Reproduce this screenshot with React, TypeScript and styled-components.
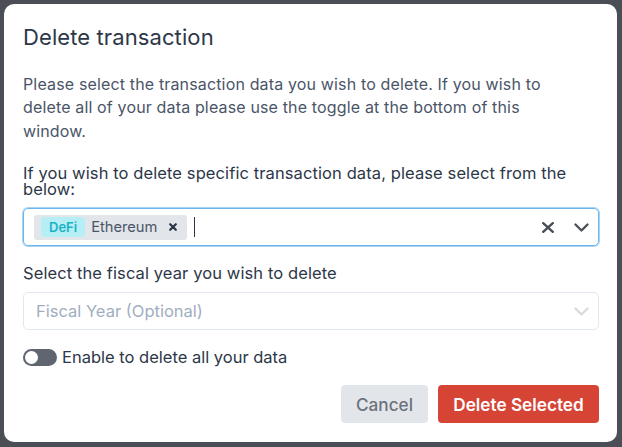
import React from "react";
import styled, { createGlobalStyle } from "styled-components";

const Global = createGlobalStyle`
  html, body { margin: 0; padding: 0; }
  body {
    width: 622px; height: 447px; overflow: hidden;
    background: #4b4f55;
    font-family: Inter, "Noto Sans", sans-serif;
  }
`;

const Overlay = styled.div`
  width: 622px;
  height: 447px;
  box-sizing: border-box;
  padding: 4px 5px 5px 4px;
  display: flex;
`;

const Dialog = styled.div`
  flex: 1;
  background: #fff;
  border-radius: 10px;
  padding: 19px 18px 19px 19px;
  display: flex;
  flex-direction: column;
`;

const Title = styled.h2`
  margin: 0;
  font-size: 22px;
  font-weight: 400;
  color: #2d3748;
  line-height: 28px;
  letter-spacing: 0.1px;
`;

const Para = styled.p`
  margin: 21.5px 0 0;
  max-width: 545px;
  font-size: 16px;
  line-height: 23.5px;
  letter-spacing: 0.15px;
  color: #4a5568;
`;

const Label = styled.div<{ $mt: number }>`
  margin-top: ${(p) => p.$mt}px;
  font-size: 16.5px;
  line-height: 16px;
  letter-spacing: 0.1px;
  color: #2d3748;
`;

const SelectBox = styled.div<{ $focused?: boolean }>`
  margin-top: 11px;
  height: 38px;
  box-sizing: border-box;
  border: 1px solid ${(p) => (p.$focused ? "#6cb6ee" : "#e2e8f0")};
  box-shadow: ${(p) => (p.$focused ? "0 0 0 1px #a9d4f5" : "none")};
  border-radius: 5px;
  display: flex;
  align-items: center;
  padding: 0 9px 0 10px;
`;

const Values = styled.div`
  flex: 1;
  display: flex;
  align-items: center;
  gap: 7px;
`;

const Chip = styled.div`
  display: flex;
  align-items: center;
  height: 25px;
  background: #e2e5e9;
  border-radius: 3px;
  padding: 0 10px 0 7px;
`;

const Badge = styled.span`
  background: #b6eef5;
  color: #1cb2c6;
  font-weight: 600;
  font-size: 13px;
  border-radius: 4px;
  padding: 0 8px;
  height: 20px;
  display: flex;
  align-items: center;
`;

const ChipText = styled.span`
  margin-left: 6px;
  margin-right: 12px;
  font-size: 14.7px;
  color: #4a5568;
`;

const ChipRemove = styled.span`
  display: flex;
`;

const Caret = styled.span`
  width: 1px;
  height: 20px;
  background: #2d3748;
`;

const Placeholder = styled.span`
  font-size: 16.5px;
  color: #a0aec0;
  padding-left: 2px;
`;

const Icons = styled.div`
  display: flex;
  align-items: center;
  gap: 20px;
`;

const ToggleRow = styled.div`
  margin-top: 19px;
  display: flex;
  align-items: center;
  gap: 5px;
  font-size: 16.5px;
  line-height: 17px;
  color: #2d3748;
`;

const Track = styled.div`
  width: 34px;
  height: 17px;
  border-radius: 9px;
  background: #5f6670;
  display: flex;
  align-items: center;
  padding: 0 2px;
  box-sizing: border-box;
`;

const Knob = styled.div`
  width: 13px;
  height: 13px;
  border-radius: 50%;
  background: #fff;
`;

const Footer = styled.div`
  margin-top: auto;
  display: flex;
  justify-content: flex-end;
  gap: 10px;
`;

const Button = styled.button<{ $primary?: boolean }>`
  height: 38px;
  border: none;
  border-radius: 4px;
  font-family: inherit;
  font-size: 17.2px;
  font-weight: ${(p) => (p.$primary ? 600 : 500)};
  width: ${(p) => (p.$primary ? 161 : 87)}px;
  padding: 0;
  background: ${(p) => (p.$primary ? "#d64436" : "#e2e6ea")};
  color: ${(p) => (p.$primary ? "#fff" : "#6c737d")};
`;

const XIcon = ({ w, h, color, sw }: { w: number; h: number; color: string; sw: number }) => (
  <svg width={w} height={h} viewBox={`0 0 ${w} ${h}`}>
    <path d={`M1.2 1.2L${w - 1.2} ${h - 1.2}M${w - 1.2} 1.2L1.2 ${h - 1.2}`} stroke={color} strokeWidth={sw} strokeLinecap="round" />
  </svg>
);

const Chevron = ({ color }: { color: string }) => (
  <svg width="15" height="9" viewBox="0 0 15 9">
    <path d="M1.5 1.5L7.5 7.5L13.5 1.5" stroke={color} strokeWidth="2.3" fill="none" strokeLinecap="round" strokeLinejoin="round" />
  </svg>
);

export default function App() {
  return (
    <>
      <Global />
      <Overlay>
        <Dialog>
          <Title>Delete transaction</Title>
          <Para>
            Please select the transaction data you wish to delete. If you wish to delete all of your data please use the toggle at the bottom of this window.
          </Para>
          <Label $mt={22}>If you wish to delete specific transaction data, please select from the below:</Label>
          <SelectBox $focused>
            <Values>
              <Chip>
                <Badge>DeFi</Badge>
                <ChipText>Ethereum</ChipText>
                <ChipRemove>
                  <XIcon w={8} h={8} color="#2d3748" sw={2.2} />
                </ChipRemove>
              </Chip>
              <Caret />
            </Values>
            <Icons>
              <XIcon w={12} h={11} color="#4a4f57" sw={2.4} />
              <Chevron color="#4a4f57" />
            </Icons>
          </SelectBox>
          <Label $mt={19}>Select the fiscal year you wish to delete</Label>
          <SelectBox>
            <Values>
              <Placeholder>Fiscal Year (Optional)</Placeholder>
            </Values>
            <Icons>
              <Chevron color="#d6d9de" />
            </Icons>
          </SelectBox>
          <ToggleRow>
            <Track>
              <Knob />
            </Track>
            Enable to delete all your data
          </ToggleRow>
          <Footer>
            <Button>Cancel</Button>
            <Button $primary>Delete Selected</Button>
          </Footer>
        </Dialog>
      </Overlay>
    </>
  );
}
